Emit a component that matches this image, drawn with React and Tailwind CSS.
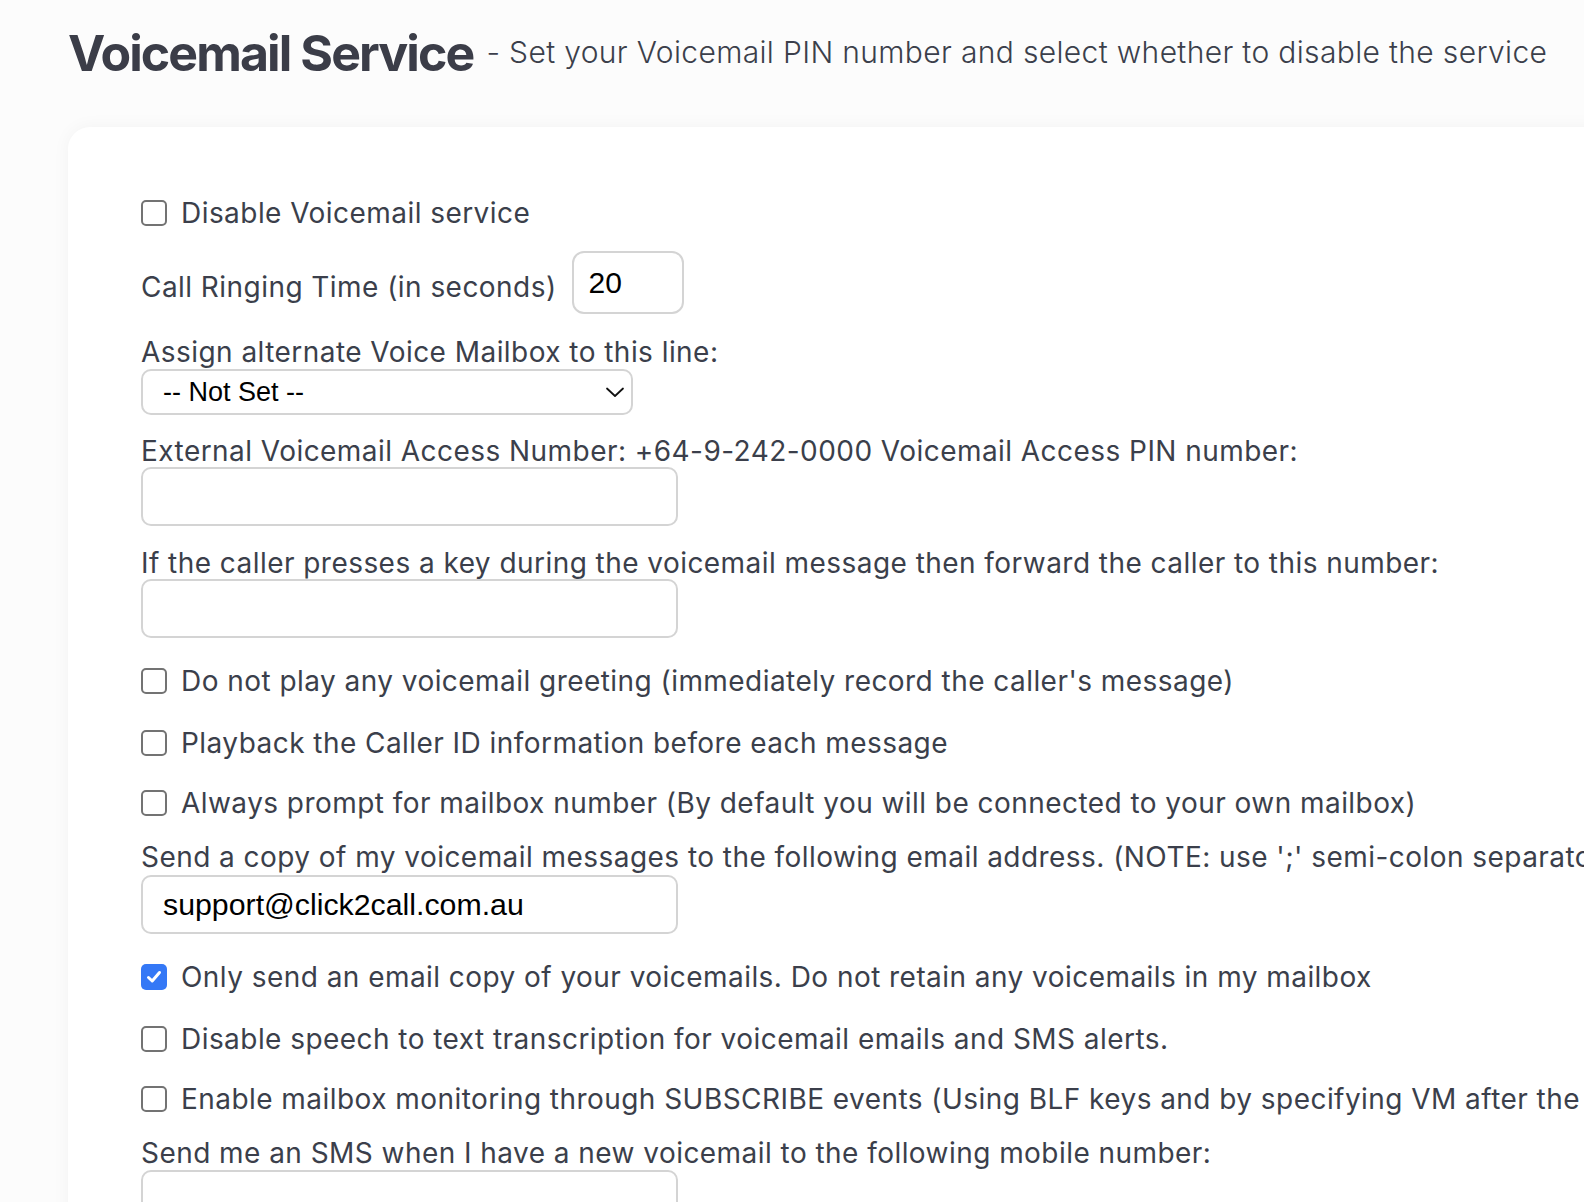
import React from "react";

const font = { fontFamily: "Inter, 'Noto Sans', sans-serif" };
const arial = { fontFamily: "'Liberation Sans', Arial, sans-serif" };

function Box({ checked }) {
  if (checked) {
    return (
      <span className="flex h-[26px] w-[26px] shrink-0 items-center justify-center rounded-[5px] bg-[#3478f6]">
        <svg width="18" height="18" viewBox="0 0 18 18" fill="none">
          <path d="M3.5 9.5 L7.2 13 L14.5 4.5" stroke="white" strokeWidth="3" strokeLinecap="round" strokeLinejoin="round" />
        </svg>
      </span>
    );
  }
  return <span className="block h-[26px] w-[26px] shrink-0 rounded-[5px] border-2 border-[#737373] bg-white" />;
}

function CheckRow({ checked, children, className = "" }) {
  return (
    <div className={"flex h-[40px] items-center gap-[14px] whitespace-nowrap " + className}>
      <Box checked={checked} />
      <span>{children}</span>
    </div>
  );
}

function Label({ children, className = "" }) {
  return <div className={"h-[34px] leading-[34px] whitespace-nowrap " + className}>{children}</div>;
}

function TextBox({ value = "", className = "" }) {
  return (
    <div
      className={
        "flex h-[59px] w-[537px] items-center rounded-[10px] border-2 border-[#d4d4d4] bg-white pl-[20px] text-[30.3px] tracking-normal text-black " +
        className
      }
      style={arial}
    >
      {value}
    </div>
  );
}

export default function App() {
  return (
    <div className="h-[1202px] w-[1584px] overflow-hidden bg-[#fcfcfc] text-[#3b3f4b]" style={font}>
      <div className="flex items-center whitespace-nowrap pl-[68px] pt-[27px]">
        <span className="text-[50px] font-bold leading-[52px] tracking-[-1.9px] text-[#3b3d48]">Voicemail Service</span>
        <span className="ml-[13px] mt-[-2px] text-[30px] font-light tracking-[0.35px] text-[#3b3f4b]">- Set your Voicemail PIN number and select whether to disable the service</span>
      </div>

      <div className="ml-[68px] mt-[48px] h-[1200px] w-[1700px] rounded-[22px] bg-white pl-[73px] pt-[66px] text-[28px] tracking-[0.45px] shadow-[0_0_18px_rgba(0,0,0,0.045)]">
        <CheckRow>Disable Voicemail service</CheckRow>

        <div className="mt-[18px] flex h-[63px] items-center whitespace-nowrap">
          <span className="mt-[8px]">Call Ringing Time (in seconds)</span>
          <div
            className="ml-[15px] flex h-[63px] w-[112px] items-center rounded-[12px] border-2 border-[#d4d4d4] bg-white pl-[15px] text-[30px] tracking-normal text-black"
            style={arial}
          >
            20
          </div>
        </div>

        <Label className="mt-[21px]">Assign alternate Voice Mailbox to this line:</Label>
        <div
          className="flex h-[46px] w-[492px] items-center justify-between rounded-[10px] border-2 border-[#d4d4d4] bg-white pl-[20px] pr-[6px] text-[27px] tracking-normal text-black"
          style={arial}
        >
          <span>-- Not Set --</span>
          <svg width="20" height="14" viewBox="0 0 20 14" fill="none">
            <path d="M2 3.5 L10 11 L18 3.5" stroke="#111" strokeWidth="1.8" strokeLinecap="round" strokeLinejoin="round" />
          </svg>
        </div>

        <Label className="mt-[19px]">External Voicemail Access Number: +64-9-242-0000 Voicemail Access PIN number:</Label>
        <TextBox className="mt-[-1px]" />

        <Label className="mt-[20px]">If the caller presses a key during the voicemail message then forward the caller to this number:</Label>
        <TextBox className="mt-[-1px]" />

        <CheckRow className="mt-[23px]">Do not play any voicemail greeting (immediately record the caller's message)</CheckRow>
        <CheckRow className="mt-[22px]">Playback the Caller ID information before each message</CheckRow>
        <CheckRow className="mt-[20px]">Always prompt for mailbox number (By default you will be connected to your own mailbox)</CheckRow>

        <Label className="mt-[17px]">Send a copy of my voicemail messages to the following email address. (NOTE: use ';' semi-colon separator for multiple addresses)</Label>
        <TextBox value="support@click2call.com.au" className="mt-[1px]" />

        <CheckRow checked className="mt-[23px]">Only send an email copy of your voicemails. Do not retain any voicemails in my mailbox</CheckRow>
        <CheckRow className="mt-[22px]">Disable speech to text transcription for voicemail emails and SMS alerts.</CheckRow>
        <CheckRow className="mt-[20px]">Enable mailbox monitoring through SUBSCRIBE events (Using BLF keys and by specifying VM after the extension number)</CheckRow>

        <Label className="mt-[17px]">Send me an SMS when I have a new voicemail to the following mobile number:</Label>
        <TextBox />
      </div>
    </div>
  );
}
